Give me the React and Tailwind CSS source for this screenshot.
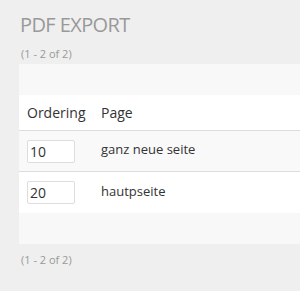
export default function App() {
  const rows = [
    { ord: "10", page: "ganz neue seite" },
    { ord: "20", page: "hautpseite" },
  ];
  return (
    <div className="w-[300px] h-[291px] bg-[#efefef] overflow-hidden pl-[19px] pt-[11px]" style={{ fontFamily: '"Open Sans", sans-serif' }}>
      <h1 className="text-[20px] leading-[28px] text-[#999] font-normal pl-[1px] tracking-[-0.6px]">PDF EXPORT</h1>
      <div className="text-[11px] leading-[15px] text-[#999] mt-[7px] pl-[2px]">(1 - 2 of 2)</div>
      <div className="mt-[3px] w-[320px]">
        <div className="h-[31px] bg-[#f8f8f8]"></div>
        <div className="h-[36px] bg-white flex items-center text-[14px] text-[#333] border-b border-[#ddd]">
          <div className="w-[82px] pl-[8px]">Ordering</div>
          <div>Page</div>
        </div>
        {rows.map((r, i) => (
          <div key={i} className={`h-[41px] flex items-center text-[13px] text-[#333] ${i === 0 ? "bg-[#f9f9f9] border-b border-[#ddd]" : "bg-white"}`}>
            <div className="w-[82px] pl-[8px]">
              <div className="w-[48px] h-[23px] bg-white border border-[#ddd] rounded-[2px] flex items-center pl-[2px] text-[14px] text-[#333]">{r.ord}</div>
            </div>
            <div className="-mt-[2px]">{r.page}</div>
          </div>
        ))}
        <div className="h-[31px] bg-[#f8f8f8]"></div>
      </div>
      <div className="text-[11px] leading-[15px] text-[#999] mt-[8px] pl-[2px]">(1 - 2 of 2)</div>
    </div>
  );
}
